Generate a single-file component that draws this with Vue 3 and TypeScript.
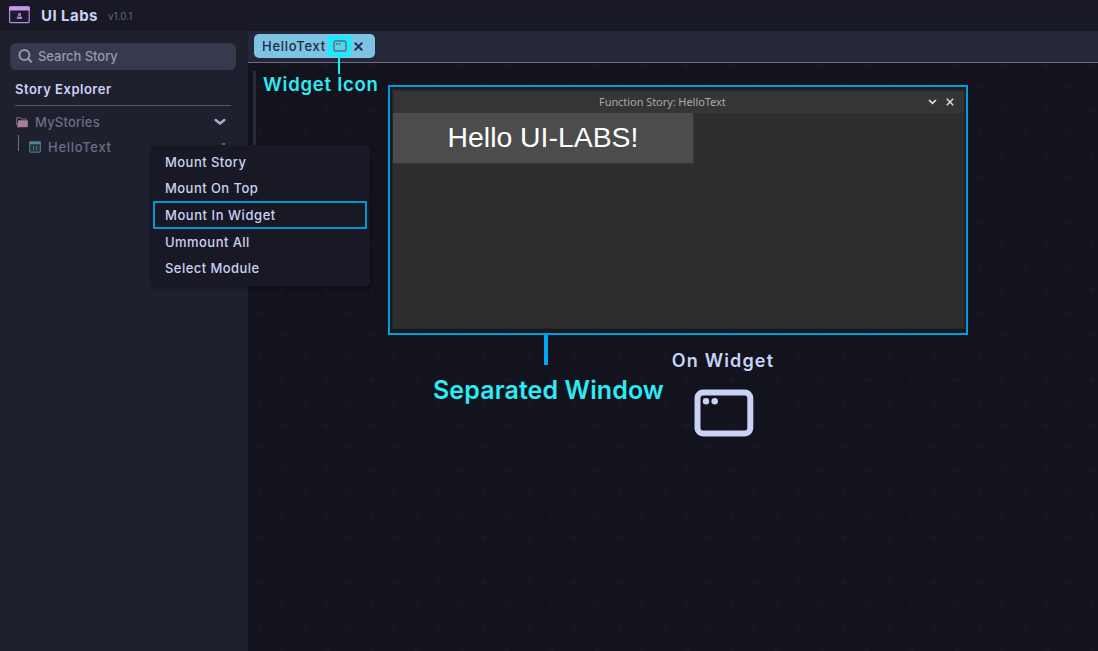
<script setup lang="ts">
interface MenuItem {
  label: string
  active?: boolean
}

const menu: MenuItem[] = [
  { label: 'Mount Story' },
  { label: 'Mount On Top' },
  { label: 'Mount In Widget', active: true },
  { label: 'Ummount All' },
  { label: 'Select Module' },
]
</script>

<template>
  <div class="app">
    <header class="topbar">
      <svg class="logo" width="21" height="18" viewBox="0 0 21 18">
        <rect x="0.6" y="0.9" width="19.6" height="15.8" rx="1" fill="#1c1a2b" stroke="#b48ce4" stroke-width="1.2" />
        <rect x="0" y="0.4" width="20.8" height="4" rx="1" fill="#c49af0" />
        <path d="M9.200 7h2.600v2l1.500 3q.3 1-.8 1H8.500q-1.100 0-.8-1l1.500-3z" fill="#a582cc" />
        <path d="M8.500 10.400h4" stroke="#4d3c68" stroke-width="0.8" />
      </svg>
      <span class="brand">UI Labs</span>
      <span class="version">v1.0.1</span>
    </header>

    <div class="body">
      <aside class="sidebar">
        <div class="search">
          <svg width="15" height="15" viewBox="0 0 15 15" fill="none" stroke="#9399b2" stroke-width="2" stroke-linecap="round">
            <circle cx="6.400" cy="6" r="5" />
            <path d="M10.200 9.800l3 3" />
          </svg>
          <span class="search-text">Search Story</span>
        </div>
        <h2 class="explorer">Story Explorer</h2>
        <div class="row folder">
          <svg width="12" height="12" viewBox="0 0 12 12">
            <path d="M.7 9V1.600h3.600L5.500 3h4.800v1.300" fill="none" stroke="#86647f" stroke-width="1" />
            <path d="M2.200 4.300h9.600v5.900q0 1-1 1H1z" fill="#a67d9b" />
          </svg>
          <span class="folder-text">MyStories</span>
          <svg class="chev" width="12" height="8" viewBox="0 0 12 8" fill="none" stroke="#a6adc8" stroke-width="2.500" stroke-linecap="round" stroke-linejoin="round">
            <path d="M1.700 2L6 5.500 10.300 2" />
          </svg>
        </div>
        <div class="row story">
          <svg width="12" height="12" viewBox="0 0 12 12">
            <rect x="0.6" y="0.8" width="10.800" height="10.400" rx="1" fill="#243541" stroke="#447383" stroke-width="1.200" />
            <path d="M.3 2h11.400" stroke="#4c8495" stroke-width="2.400" />
            <path d="M4.500 5v4M7.500 5v4" stroke="#447383" stroke-width="1" />
          </svg>
          <span class="story-text">HelloText</span>
          <i class="more"></i>
        </div>
      </aside>

      <section class="workspace">
        <div class="tabs">
          <div class="tab">
            <span class="tab-text">HelloText</span>
            <span class="tab-widget">
              <svg width="14" height="12" viewBox="0 0 14 12">
                <rect x="1" y="1" width="12" height="10" rx="1.800" fill="none" stroke="#397c90" stroke-width="1.500" />
                <circle cx="3.800" cy="3.800" r=".9" fill="#286578" />
                <circle cx="6.600" cy="3.800" r=".9" fill="#286578" />
              </svg>
            </span>
            <svg class="tab-x" width="9" height="9" viewBox="0 0 9 9" stroke="#26324a" stroke-width="2" stroke-linecap="round">
              <path d="M1.300 1.300l6.400 6.400M7.700 1.300L1.300 7.700" />
            </svg>
          </div>
        </div>
        <div class="canvas">
          <svg class="pattern" width="850" height="588">
            <defs>
              <pattern id="plus" width="45" height="45" patternUnits="userSpaceOnUse">
                <path d="M33.700 -1v6M30.700 2h6M11.200 21.500v6M8.200 24.500h6" stroke="#161722" stroke-width="1.800" />
              </pattern>
            </defs>
            <rect width="850" height="588" fill="url(#plus)" />
          </svg>
          <i class="scroll"></i>
          <div class="on-widget">
            <span class="on-text">On Widget</span>
            <svg width="60" height="48" viewBox="0 0 60 48">
              <rect x="3.500" y="3.500" width="52.800" height="41" rx="5.500" fill="none" stroke="#cad2f5" stroke-width="6" />
              <circle cx="12" cy="12.300" r="3.200" fill="#cad2f5" />
              <circle cx="20.700" cy="12.300" r="3.200" fill="#cad2f5" />
            </svg>
          </div>
        </div>
      </section>
    </div>

    <div class="window">
      <div class="win-inner">
        <div class="titlebar">
          <span class="win-title">Function Story: HelloText</span>
          <span class="win-buttons">
            <svg width="9" height="8" viewBox="0 0 9 8" fill="none" stroke="#e0e0e0" stroke-width="1.700"><path d="M1 2l3.500 3.400L8 2" /></svg>
            <svg width="8" height="8" viewBox="0 0 8 8" stroke="#e0e0e0" stroke-width="1.400"><path d="M.8.8l6.400 6.400M7.200.8L.8 7.200" /></svg>
          </span>
        </div>
        <div class="hello"><span>Hello UI-LABS!</span></div>
      </div>
    </div>

    <i class="line line-icon"></i>
    <span class="note note-icon">Widget Icon</span>
    <i class="line line-window"></i>
    <span class="note note-window">Separated Window</span>

    <nav class="menu">
      <div v-for="m in menu" :key="m.label" class="item" :class="{ active: m.active }">
        <span>{{ m.label }}</span>
      </div>
    </nav>
  </div>
</template>

<style>
body { margin: 0; background: #12131c; overflow: hidden; }
</style>

<style scoped>
.app { position: relative; width: 1098px; height: 651px; overflow: hidden; background: #12131c; color: #cad2f5; font-family: Inter, "Open Sans", sans-serif; display: flex; flex-direction: column; white-space: nowrap; }
.app * { box-sizing: border-box; }
svg { display: block; flex: none; }
.topbar { height: 31px; flex: none; background: #181924; display: flex; align-items: center; padding-left: 9px; }
.logo { margin-top: -1px; }
.brand { margin-left: 11px; font-size: 15px; font-weight: 700; letter-spacing: .45px; line-height: 20px; }
.version { margin-left: 10px; font-size: 10px; color: #62667c; letter-spacing: 0; }
.body { flex: 1; display: flex; min-height: 0; }
.sidebar { width: 248px; flex: none; background: #1f202e; padding: 12px 12px 0 10px; }
.search { height: 27px; border-radius: 6px; background: #363a4f; display: flex; align-items: center; padding: 0 0 1px 8px; color: #9399b2; }
.search-text { margin-left: 5px; font-size: 13px; font-weight: 500; letter-spacing: -.05px; }
.explorer { margin: 0 5px; height: 36px; line-height: 38px; border-bottom: 1px solid #55586d; font-size: 13px; font-weight: 600; letter-spacing: .5px; }
.row { display: flex; align-items: center; height: 25px; color: #6a6e87; font-size: 13px; font-weight: 500; }
.folder { margin-top: 3px; padding-left: 6px; }
.folder-text { margin-left: 7px; letter-spacing: .2px; }
.chev { margin: 0 10px 0 auto; }
.story { padding-left: 8px; }
.story::before { content: ""; width: 1px; height: 16px; margin-top: -7px; background: #6a6e87; }
.story svg { margin-left: 10px; }
.story-text { margin-left: 7px; letter-spacing: .7px; }
.more { width: 3px; height: 8px; margin: 0 11px 0 auto; background: #62667d; }
.workspace { flex: 1; display: flex; flex-direction: column; }
.tabs { height: 32px; flex: none; background: #24263a; border-bottom: 1px solid #6a6d83; padding: 3px 6px 0; }
.tab { width: 121px; height: 24px; border-radius: 5px; background: #7dc4e4; display: flex; align-items: center; padding-left: 8px; color: #202a40; }
.tab-text { width: 66px; font-size: 13px; font-weight: 500; letter-spacing: .72px; }
.tab-widget { width: 23px; height: 20px; background: #5ccfea; border: 3px solid #00f7ff; display: flex; align-items: center; justify-content: center; }
.tab-x { margin-left: 3px; margin-top: 1px; }
.canvas { position: relative; flex: 1; }
.pattern { position: absolute; inset: 0; }
.scroll { position: absolute; left: 5px; top: 8px; width: 3px; height: 82px; background: #2a2b36; }
.on-widget { position: absolute; left: 415px; top: 286px; width: 120px; display: flex; flex-direction: column; align-items: center; }
.on-text { font-size: 18px; font-weight: 600; line-height: 24px; letter-spacing: 1.150px; }
.on-widget svg { margin: 16px 0 0 1px; }
.window { position: absolute; left: 388px; top: 85px; width: 580px; height: 250px; border: 2px solid #009ee0; background: #191a20; padding: 2px 1px 4px 2px; }
.win-inner { height: 100%; background: #2e2e2e; border: 1px solid #252628; border-top-width: 2px; }
.titlebar { height: 22px; margin-left: 1px; background: #353535; display: flex; align-items: center; padding-bottom: 1px; }
.win-title { margin-left: 205px; color: #a8a8a4; font-family: "Noto Sans", sans-serif; font-size: 11px; letter-spacing: -.06px; line-height: 18px; }
.win-buttons { margin: 1px 10px 0 auto; display: flex; align-items: center; gap: 9px; }
.hello { width: 301px; height: 51px; background: #4c4c4c; border-right: 1px solid #30363a; border-bottom: 1px solid #30363a; display: flex; align-items: center; justify-content: center; padding-bottom: 2px; color: #fff; font-family: "Liberation Sans", sans-serif; font-size: 28.400px; }
.line { position: absolute; }
.line-icon { left: 338px; top: 57px; width: 2px; height: 17px; background: #00f7ff; }
.line-window { left: 544px; top: 335px; width: 4px; height: 30px; background: #00a8f3; }
.note { position: absolute; color: #2eeaf5; font-weight: 600; }
.note-icon { left: 263px; top: 72px; font-size: 18.500px; line-height: 24px; letter-spacing: .75px; }
.note-window { left: 433px; top: 374px; font-size: 25px; line-height: 32px; letter-spacing: .1px; }
.menu { position: absolute; left: 150px; top: 145px; width: 220px; height: 141px; border-radius: 4px; background: #181924; padding: 4px 3px; box-shadow: 2px 3px 4px rgba(0, 0, 0, .22); font-size: 13px; font-weight: 500; letter-spacing: .45px; }
.item { height: 26px; padding-left: 12px; display: flex; align-items: center; }
.active { height: 28px; padding: 0 0 1px 10px; border: 2px solid #0495d4; letter-spacing: .55px; }
</style>
